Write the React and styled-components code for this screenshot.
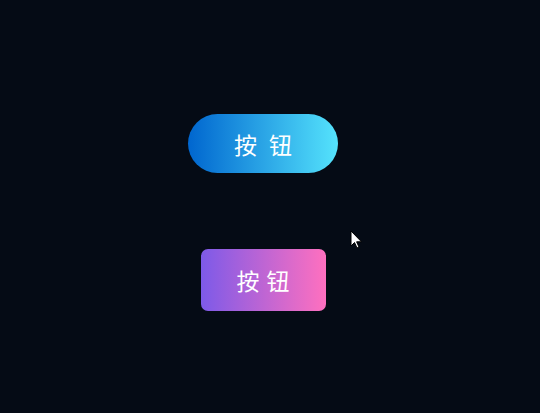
import React from 'react'
import styled, { createGlobalStyle } from 'styled-components'

const GlobalStyle = createGlobalStyle`
  html, body {
    margin: 0;
    padding: 0;
    background: #050b15;
  }
`

const Page = styled.div`
  position: relative;
  width: 540px;
  height: 413px;
  box-sizing: border-box;
  padding: 114px 14px 0 0;
  display: flex;
  flex-direction: column;
  align-items: center;
  gap: 76px;
  background: #050b15;
  font-family: "Noto Sans CJK SC", "Noto Sans", sans-serif;
`

const Button = styled.button`
  border: none;
  outline: none;
  cursor: pointer;
  display: flex;
  align-items: center;
  justify-content: center;
  color: #ffffff;
  font-family: inherit;
  font-size: 23px;
  font-weight: 400;
  width: ${p => p.$w}px;
  height: ${p => p.$h}px;
  border-radius: ${p => p.$radius};
  letter-spacing: ${p => p.$spacing}px;
  padding: 0 0 0 ${p => p.$spacing}px;
  background: ${p => p.$bg};
`

const Cursor = styled.svg`
  position: absolute;
  left: 350px;
  top: 230px;
`

export default function App() {
  return (
    <>
      <GlobalStyle />
      <Page>
        <Button
          $w={150}
          $h={59}
          $radius="30px"
          $spacing={12}
          $bg="linear-gradient(90deg, #0066cf 0%, #55e3fc 100%)"
        >
          按钮
        </Button>
        <Button
          $w={125}
          $h={62}
          $radius="7px"
          $spacing={7}
          $bg="linear-gradient(90deg, #7d5ae8 0%, #ff70bf 100%)"
        >
          按钮
        </Button>
        <Cursor width="13" height="20" viewBox="0 0 13 20">
          <path d="M1 1 L1 16 L4.5 12.5 L7 18 L9 17 L6.6 11.8 L11.5 11.8 Z" fill="#ffffff" stroke="#000000" strokeWidth="1" />
        </Cursor>
      </Page>
    </>
  )
}
